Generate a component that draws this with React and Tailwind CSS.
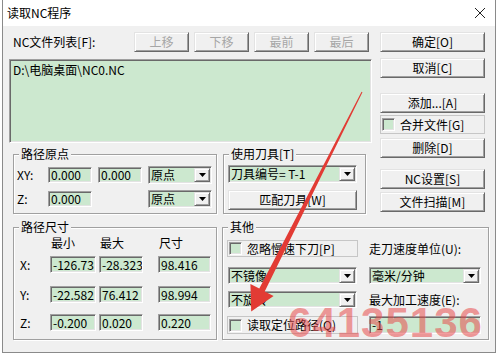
import React from 'react';

// classic win32 look
const raised =
  'border border-[#e3e3e3] border-r-[#696969] border-b-[#696969] shadow-[inset_1px_1px_0_#fff,inset_-1px_-1px_0_#a0a0a0] bg-[#f0f0f0]';
const sunken =
  'border border-[#a0a0a0] border-r-white border-b-white shadow-[inset_1px_1px_0_#696969,inset_-1px_-1px_0_#e3e3e3] bg-[#cce8cf]';

function Btn({ children, className = '', disabled, def }) {
  return (
    <div
      className={`${raised} ${def ? 'border-[#696969]' : ''} flex items-center justify-center h-[20px] leading-none ${
        disabled ? 'text-[#a6a6a6]' : 'text-black'
      } ${className}`}
    >
      {children}
    </div>
  );
}

function Field({ value, className = '' }) {
  return (
    <div className={`${sunken} flex items-center pl-[2px] overflow-x-hidden whitespace-nowrap leading-[14px] ${className}`}>
      {value}
    </div>
  );
}

function Combo({ text, className = '' }) {
  return (
    <div className={`${sunken} flex items-center h-[18px] ${className}`}>
      <span className="flex-1 pl-[2px] leading-[14px] whitespace-nowrap">{text}</span>
      <div className={`${raised} w-[16px] h-[14px] mr-[1px] flex items-center justify-center`}>
        <svg width="7" height="4" viewBox="0 0 7 4">
          <polygon points="0,0 7,0 3.5,4" fill="#000" />
        </svg>
      </div>
    </div>
  );
}

function Check({ label, className = '' }) {
  return (
    <div className={`border border-[#c6c6c6] flex items-center pl-[1px] ${className}`}>
      <div className={`${sunken} w-[13px] h-[13px] shrink-0`} />
      <span className="ml-[5px] leading-none whitespace-nowrap">{label}</span>
    </div>
  );
}

function Group({ title, className = '', children }) {
  return (
    <div className={`border border-[#a0a0a0] shadow-[inset_1px_1px_0_#fff,1px_1px_0_#fff] ${className}`}>
      <div className="-mt-[7px] ml-[5px] w-fit bg-[#f0f0f0] px-[2px] h-[12px] flex items-center leading-none">
        {title}
      </div>
      {children}
    </div>
  );
}

export default function App() {
  return (
    <div className="relative w-[498px] h-[355px] overflow-hidden bg-white text-[12px] text-black font-['Noto_Sans_CJK_SC',sans-serif]">
      <div className="ml-[2px] w-[494px] h-[353px] border-x border-b border-[#8a8a8a] flex flex-col">
        {/* title bar */}
        <div className="h-[26px] bg-white flex items-center justify-between pl-[4px] pr-[9px]">
          <span className="leading-none text-[12px]">读取NC程序</span>
          <svg width="12" height="12" viewBox="0 0 12 12">
            <path d="M1 1 L11 11 M11 1 L1 11" stroke="#222" strokeWidth="1" />
          </svg>
        </div>

        {/* body */}
        <div className="flex-1 bg-[#f0f0f0] pt-[6px] pl-[5px]">
          <div className="flex">
            {/* left part */}
            <div className="w-[365px]">
              <div className="flex items-center h-[20px] pr-[4px]">
                <span className="flex-1 pl-[5px] leading-none">NC文件列表[F]:</span>
                <div className="flex gap-[5px]">
                  <Btn disabled className="w-[55px]">上移</Btn>
                  <Btn disabled className="w-[55px]">下移</Btn>
                  <Btn disabled className="w-[55px]">最前</Btn>
                  <Btn disabled className="w-[55px]">最后</Btn>
                </div>
              </div>

              <div className={`${sunken} mt-[7px] mx-[1px] h-[84px] pl-[3px] pt-[4px] leading-none`}>
                D:\电脑桌面\NC0.NC
              </div>

              <div className="flex mt-[11px]">
                <Group title="路径原点" className="ml-[5px] w-[204px] h-[60px]">
                  <div className="pl-[3px] mt-[6px] flex items-center h-[18px]">
                    <span className="w-[31px] leading-none">XY:</span>
                    <Field value="0.000" className="w-[44px] h-[16px]" />
                    <Field value="0.000" className="w-[44px] h-[16px] ml-[6px]" />
                    <Combo text="原点" className="w-[64px] ml-[6px]" />
                  </div>
                  <div className="pl-[3px] mt-[6px] flex items-center h-[18px]">
                    <span className="w-[31px] leading-none">Z:</span>
                    <Field value="0.000" className="w-[44px] h-[16px]" />
                    <Combo text="原点" className="w-[64px] ml-[56px]" />
                  </div>
                </Group>

                <Group title="使用刀具[T]" className="ml-[6px] w-[143px] h-[60px]">
                  <Combo text="刀具编号= T-1" className="w-[129px] ml-[4px] mt-[5px]" />
                  <Btn className="w-[129px] ml-[4px] mt-[7px] h-[18px]">匹配刀具[W]</Btn>
                </Group>
              </div>
            </div>

            {/* right column */}
            <div className="w-[105px] ml-[7px] flex flex-col">
              <Btn def>确定[O]</Btn>
              <Btn className="mt-[6px]">取消[C]</Btn>
              <Btn className="mt-[15px]">添加...[A]</Btn>
              <Check label="合并文件[G]" className="mt-[2px] h-[19px]" />
              <Btn className="mt-[4px]">删除[D]</Btn>
              <Btn className="mt-[11px]">NC设置[S]</Btn>
              <Btn className="mt-[3px]">文件扫描[M]</Btn>
            </div>
          </div>

          {/* bottom groups */}
          <div className="flex mt-[13px]">
            <Group title="路径尺寸" className="ml-[5px] w-[204px] h-[113px]">
              <div className="pl-[6px] mt-[4px] flex h-[12px] items-center leading-none">
                <span className="w-[30px]" />
                <span className="w-[46px] pl-[1px]">最小</span>
                <span className="w-[44px] ml-[3px] pl-[1px]">最大</span>
                <span className="w-[53px] ml-[15px] pl-[1px]">尺寸</span>
              </div>
              {[
                ['X:', '-126.73', '-28.323', '98.416', 'mt-[7px]'],
                ['Y:', '-22.582', '76.412', '98.994', 'mt-[13px]'],
                ['Z:', '-0.200', '0.020', '0.220', 'mt-[11px]'],
              ].map(([l, a, b, c, m]) => (
                <div key={l} className={`pl-[6px] flex items-center h-[17px] ${m}`}>
                  <span className="w-[30px] leading-none">{l}</span>
                  <Field value={a} className="w-[46px] h-[17px]" />
                  <Field value={b} className="w-[44px] h-[17px] ml-[3px]" />
                  <Field value={c} className="w-[53px] h-[17px] ml-[15px]" />
                </div>
              ))}
            </Group>

            <Group title="其他" className="ml-[5px] w-[267px] h-[113px]">
              <div className="flex items-center mt-[7px] h-[17px]">
                <Check label="忽略慢速下刀[P]" className="ml-[4px] w-[131px] h-[17px]" />
                <span className="ml-[11px] leading-none">走刀速度单位(U):</span>
              </div>
              <div className="flex items-center mt-[10px] h-[17px]">
                <Combo text="不镜像" className="ml-[5px] w-[129px] !h-[17px]" />
                <Combo text="毫米/分钟" className="ml-[12px] w-[112px] !h-[17px]" />
              </div>
              <div className="flex items-center mt-[7px] h-[17px]">
                <Combo text="不旋转" className="ml-[5px] w-[129px] !h-[17px]" />
                <span className="ml-[12px] leading-none">最大加工速度(E):</span>
              </div>
              <div className="flex items-center mt-[8px] h-[18px]">
                <Check label="读取定位路径(Q)" className="ml-[4px] w-[131px] h-[18px]" />
                <Field value="-1" className="ml-[11px] w-[112px] h-[18px]" />
              </div>
            </Group>
          </div>
        </div>
      </div>

      {/* red arrow annotation */}
      <svg className="absolute left-0 top-0 pointer-events-none" width="498" height="355" viewBox="0 0 498 355">
        <polygon
          points="361.55,91.8 362.45,92.2 264.7,291.4 273.6,295.9 251.2,311.4 250.4,284.1 259.3,288.6"
          fill="#e23b34"
        />
      </svg>

      {/* watermark */}
      <div className="absolute left-[288px] top-[302px] text-[42px] leading-none font-bold tracking-[1px] text-[rgba(232,72,72,0.55)] font-['Liberation_Sans',sans-serif] pointer-events-none">
        64135136
      </div>
    </div>
  );
}
